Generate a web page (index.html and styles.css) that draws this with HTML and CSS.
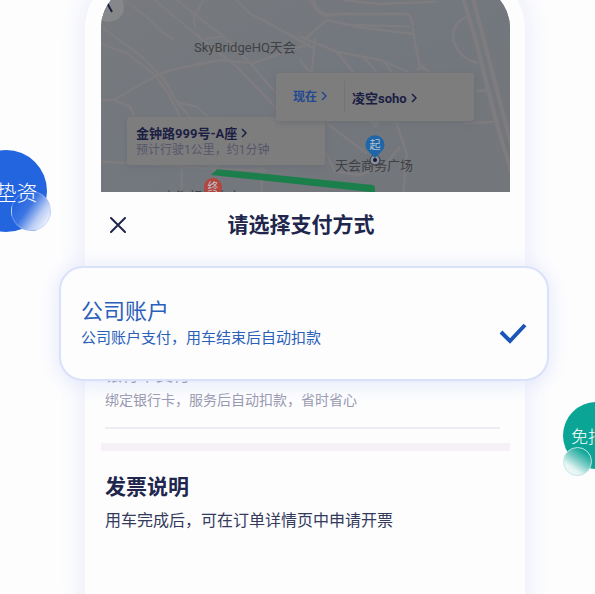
FILE: index.html
```html
<!DOCTYPE html>
<html lang="zh-CN">
<head>
<meta charset="utf-8">
<meta name="viewport" content="width=device-width, initial-scale=1">
<title>请选择支付方式</title>
<link rel="stylesheet" href="styles.css">
</head>
<body>
<main class="stage">
  <div class="bubble bubble-blue">免垫资<span class="drop"></span></div>
  <div class="bubble bubble-green">免报销<span class="drop"></span></div>

  <section class="phone">
    <div class="map">
      <svg class="map-art" viewBox="101 -16 409 208" preserveAspectRatio="xMidYMax slice" aria-hidden="true">
        <defs>
          <linearGradient id="land" x1="0" y1="0" x2="1" y2="1">
            <stop offset="0" stop-color="#77797d"/>
            <stop offset=".5" stop-color="#73787e"/>
            <stop offset="1" stop-color="#73767a"/>
          </linearGradient>
        </defs>
        <rect x="101" y="-16" width="409" height="208" fill="url(#land)"/>
        <g class="roads" transform="translate(80 0) scale(.3333)">
          <path d="M90-30 200 50 245 95 280 118"/>
          <path d="M60 78 180 165 250 235 290 305 330 352"/>
          <path d="M60 130 140 160 225 225 265 280 300 350"/>
          <path d="M60 300H100L215 235Q270 205 330 198L420 180 520 190 690 130"/>
          <path d="M200-20 380 130 470 200 590 325"/>
          <path d="M265-20 430 110 520 200 590 282"/>
          <path d="M345 85 342 50 370 0M375 115 430 110"/>
          <path d="M450-20 510 40 640 110 700 145"/>
          <path d="M100 300 150 320 165 352M290 307 350 320 385 352"/>
          <path d="M60 485 200 492 400 506 560 512M305 500V580M545 500V580"/>
        </g>
        <g class="roads" transform="translate(300 0) scale(.3333)">
          <path class="road-wide" d="M30-20 45 20Q60 45 90 45"/>
          <path d="M85 45 120 42H315Q332 42 335 60L345 130 360 200 390 216M350 212 375 195"/>
          <path d="M80 60 180 82 340 102M80 60 0 130M160 75 330 80M130 0 240 12 410 5"/>
          <path d="M0 110 110 155 240 180 325 216"/>
          <path d="M45 115 35 216M0 180 30 216M110 155 160 216M190 170 230 216M250 182 275 216"/>
          <path class="road-wide" d="M485-20 530 130 590 370 635 520"/>
          <path class="road-wide" d="M515-20 565 170 635 440"/>
          <path d="M500 50Q455 70 460 120 475 175 535 190M525 275 565 270M490 370 590 365"/>
          <path d="M80 370 200 460M290 370 320 460 310 580M300 370 270 365M75 455 105 515 180 525 250 500 300 440"/>
        </g>
        <path d="M217 169 373 185Q375 186 375 188V192H370L211 175Z" fill="#1b7f4c"/>
        <path class="panel" d="M205 163h18l-9 9zM367 119h16l-8 9z"/>
        <circle cx="109" cy="7" r="15" fill="#868789"/>
        <path d="m106 1 6 11" stroke="#1b1f40" stroke-width="2"/>
      </svg>
      <span class="place place-sky">SkyBridgeHQ天会</span>
      <span class="place place-plaza">天会商务广场</span>
      <span class="place place-cut">上海虹桥临空</span>
      <svg class="pin pin-start" viewBox="0 0 20 32" aria-hidden="true">
        <circle cx="10" cy="25" r="5" fill="#8c9094" stroke="#32364f" stroke-width="1"/>
        <path d="M10 23 4 17A9.500 9.500 0 1 1 16 17Z" fill="#1f66a8"/>
        <circle cx="10" cy="25" r="2" fill="#151a3c"/>
        <text x="10" y="14">起</text>
      </svg>
      <svg class="pin pin-end" viewBox="0 0 20 32" aria-hidden="true">
        <circle cx="10" cy="10" r="9" fill="#b5443c"/>
        <text x="10" y="14">终</text>
      </svg>
      <a class="tip tip-end" href="#end">
        <strong>金钟路999号-A座<svg class="chev" viewBox="0 0 6 10"><path d="m1 1 4 4-4 4"/></svg></strong>
        <span>预计行驶1公里，约1分钟</span>
      </a>
      <div class="tip tip-start">
        <a class="when" href="#time">现在<svg class="chev" viewBox="0 0 6 10"><path d="m1 1 4 4-4 4"/></svg></a>
        <a class="where" href="#start">凌空soho<svg class="chev" viewBox="0 0 6 10"><path d="m1 1 4 4-4 4"/></svg></a>
      </div>
    </div>

    <header class="sheet-head">
      <button class="close" type="button" aria-label="关闭">
        <svg viewBox="0 0 16 16"><path d="m1 1 14 14M15 1 1 15"/></svg>
      </button>
      <h1>请选择支付方式</h1>
    </header>

    <label class="option option-active">
      <input type="radio" name="pay" checked>
      <span class="option-text">
        <span class="option-title">公司账户</span>
        <span class="option-note">公司账户支付，用车结束后自动扣款</span>
      </span>
      <svg class="check" viewBox="0 0 28 22" aria-hidden="true"><path d="m2 10 9 9L26 3"/></svg>
    </label>

    <label class="option option-bank">
      <input type="radio" name="pay">
      <span class="option-title">银行卡支付</span>
      <span class="option-note">绑定银行卡，服务后自动扣款，省时省心</span>
    </label>
    <div class="band"></div>

    <section class="invoice">
      <h2>发票说明</h2>
      <p>用车完成后，可在订单详情页中申请开票</p>
    </section>
  </section>
</main>
</body>
</html>
```

FILE: styles.css
```css
* {
  box-sizing: border-box;
}

body {
  margin: 0;
  background: #fdfdfe;
  color: #20264c;
  font-family: Roboto, "Noto Sans CJK SC", sans-serif;
  overflow: hidden;
}

a {
  color: inherit;
  text-decoration: none;
}

.stage {
  position: relative;
  min-height: 100vh;
  padding: 0 70px 0 85px;
  overflow: hidden;
}

.phone {
  min-height: calc(100vh + 80px);
  margin: -26px 0 -54px;
  padding: 10px 15px 0 16px;
  border-radius: 54px;
  background: #fdfdfe;
  box-shadow: 0 0 28px #e6e9fa;
}

/* Map */
.map {
  position: relative;
  height: 208px;
  border-radius: 44px 44px 0 0;
  background: #75797e;
  overflow: hidden;
}

.map-art {
  display: block;
  width: 100%;
  height: 100%;
}

.roads path {
  fill: none;
  stroke: #7e7c7f;
  stroke-width: 7;
  stroke-linejoin: round;
}

.roads .road-wide {
  stroke-width: 12;
}

.panel {
  fill: #7e7d7e;
}

.place {
  position: absolute;
  color: #3f4144;
  font-size: 13px;
  line-height: 20px;
  white-space: nowrap;
}

.place-sky {
  left: 93px;
  top: 54px;
}

.place-plaza {
  left: 234px;
  top: 172px;
}

.place-cut {
  left: 62px;
  top: 203px;
}

.pin {
  position: absolute;
  width: 20px;
  height: 32px;
}

.pin text {
  fill: #b9c3ce;
  font-size: 11px;
  text-anchor: middle;
}

.pin-start {
  left: 264px;
  top: 151px;
}

.pin-end {
  left: 102px;
  top: 193px;
}

.tip {
  position: absolute;
  display: flex;
  border-radius: 3px;
  background: #7e7d7e;
  box-shadow: 0 2px 6px #6c6f74;
  color: #1a1e43;
  font-size: 13px;
  white-space: nowrap;
}

.tip-end {
  left: 26px;
  top: 133px;
  width: 198px;
  height: 48px;
  padding: 8px 9px;
  flex-direction: column;
  line-height: 18px;
}

.tip-end span {
  color: #55566a;
  font-size: 12px;
  line-height: 14px;
}

.tip-start {
  left: 175px;
  top: 89px;
  width: 198px;
  height: 48px;
  align-items: center;
  font-weight: 700;
}

.when {
  width: 69px;
  padding-left: 17px;
  color: #204890;
  font-size: 12px;
  line-height: 32px;
  border-right: 1px solid #747478;
}

.where {
  padding-left: 7px;
}

.chev {
  width: 6px;
  height: 10px;
  margin-left: 4px;
  fill: none;
  stroke: currentColor;
  stroke-width: 1.500;
}

/* Payment sheet */
.sheet-head {
  display: grid;
  grid-template-columns: 36px 1fr 45px;
  align-items: center;
  height: 66px;
}

.close {
  width: 36px;
  height: 36px;
  padding: 9px;
  border: 0;
  background: none;
}

.close svg {
  display: block;
  width: 16px;
  height: 16px;
  stroke: #20264c;
  stroke-width: 2;
  stroke-linecap: round;
}

h1,
h2 {
  margin: 0;
  font-size: 21px;
  line-height: 32px;
  font-weight: 700;
}

h1 {
  text-align: center;
}

.option input {
  position: absolute;
  opacity: 0;
  margin: 0;
}

.option-active {
  position: relative;
  z-index: 1;
  display: flex;
  align-items: center;
  justify-content: space-between;
  height: 115px;
  margin: 8px -39px 0 -42px;
  padding: 0 20px;
  border: 2px solid #d9e2fa;
  border-radius: 24px;
  background: #fdfdfe;
  box-shadow: 0 2px 20px #e1e5fa;
  color: #2a60b9;
}

.option-text {
  display: flex;
  flex-direction: column;
}

.option-active .option-title {
  font-size: 22px;
  line-height: 28px;
}

.option-active .option-note {
  font-size: 15px;
  line-height: 24px;
}

.check {
  width: 28px;
  height: 22px;
  margin-top: 18px;
  fill: none;
  stroke: #1c55b8;
  stroke-width: 4;
}

.option-bank {
  display: flex;
  flex-direction: column;
  height: 66px;
  margin: -18px 10px 14px 4px;
  border-bottom: 2px solid #efedf2;
}

.option-bank .option-title {
  color: #50556f;
  font-size: 17px;
  line-height: 24px;
}

.option-bank .option-note {
  padding-top: 3px;
  color: #9697ae;
  font-size: 14px;
  line-height: 20px;
}

.band {
  height: 8px;
  background: #f5f1f7;
}

.invoice {
  padding: 20px 4px;
}

.invoice p {
  margin: 6px 0 0;
  color: #343a5c;
  font-size: 16px;
  line-height: 24px;
}

/* Floating bubbles */
.bubble {
  position: absolute;
  z-index: 2;
  display: flex;
  align-items: center;
  justify-content: center;
  border-radius: 50%;
  color: #fff;
  font-weight: 300;
  white-space: nowrap;
}

.bubble-blue {
  left: -35px;
  top: 150px;
  width: 82px;
  height: 82px;
  background: #2364df;
  font-size: 21px;
}

.bubble-green {
  right: -35px;
  top: 402px;
  width: 67px;
  height: 67px;
  background: #0ba596;
  font-size: 17px;
}

.drop {
  position: absolute;
  z-index: -1;
  border-radius: 50%;
}

.bubble-blue .drop {
  right: -4px;
  bottom: 1px;
  width: 40px;
  height: 40px;
  border: 1px solid #aec6f566;
  background: linear-gradient(125deg, #2364df00 15%, #3c75e2 42%, #b9ccf5 68%, #f3f6fd 90%);
}

.bubble-green .drop {
  left: 0;
  bottom: -7px;
  width: 29px;
  height: 29px;
  border: 1px solid #c3e6e4;
  background: linear-gradient(215deg, #16a99b 20%, #75cac2 45%, #e3f4f3 72%, #f5fafb 90%);
}
```
